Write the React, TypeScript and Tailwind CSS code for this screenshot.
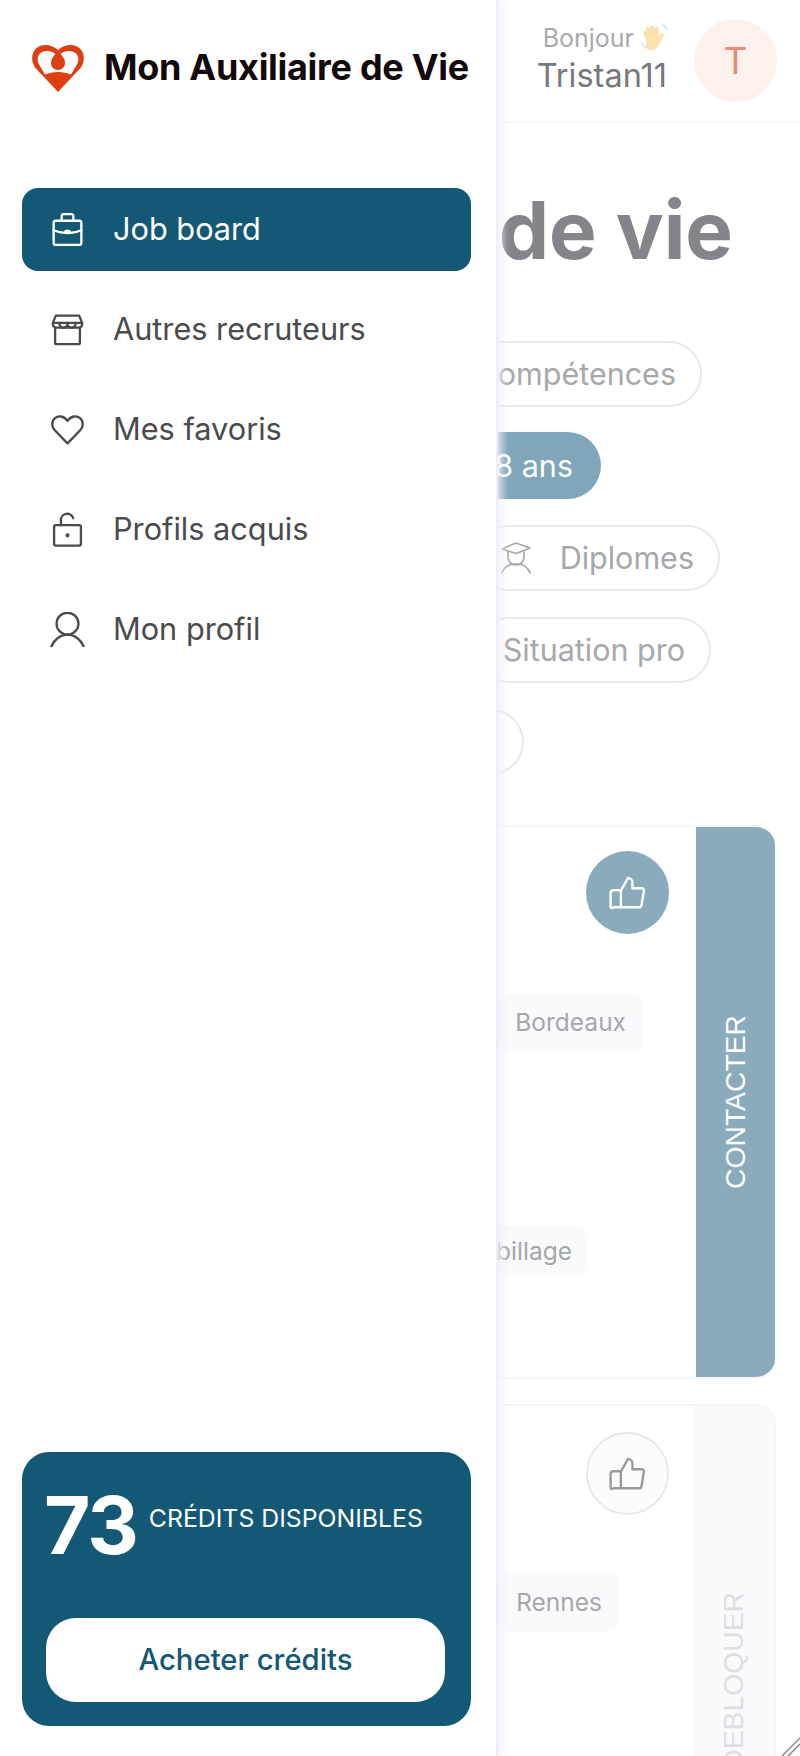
const strokeProps = { fill: "none", stroke: "currentColor", strokeWidth: 1.6, strokeLinecap: "round" as const, strokeLinejoin: "round" as const };

function Briefcase({ className }: { className: string }) {
  return (
    <svg viewBox="0 0 24 24" className={className} {...strokeProps}>
      <rect x="2.500" y="6" width="19" height="16.500" rx="1.500" />
      <path d="M8 6V3A1.500 1.500 0 0 1 9.500 1.500h5A1.500 1.500 0 0 1 16 3v3" />
      <path d="M2.500 12.500c3 1.300 5.500 1.700 8 1.800M13.500 14.300c2.500-.1 5-.5 8-1.800" />
      <rect x="10.500" y="13" width="3" height="1.500" rx=".6" />
    </svg>
  );
}
function Store({ className }: { className: string }) {
  return (
    <svg viewBox="0 0 24 24" className={className} {...strokeProps}>
      <path d="M4 2.500h16l2 5v1a2.200 2.200 0 0 1-2.200 2.200H4.200A2.200 2.200 0 0 1 2 8.500v-1z" />
      <path d="M2 7.500h20" />
      <path d="M6.500 7.500v1a2.800 2.800 0 0 0 5.500 0v-1M12 8.500a2.800 2.800 0 0 0 5.500 0v-1" />
      <path d="M3.500 11v10a1 1 0 0 0 1 1h15a1 1 0 0 0 1-1V11" />
    </svg>
  );
}
function Heart({ className }: { className: string }) {
  return (
    <svg viewBox="0 0 24 24" className={className} {...strokeProps}>
      <path d="M12 21.500 3.300 12.500C.9 10 1 6.200 3.400 4.200c2.400-2 6-1.600 8.600 1.800 2.600-3.400 6.200-3.800 8.600-1.800 2.400 2 2.500 5.800.1 8.300z" />
    </svg>
  );
}
function Lock({ className }: { className: string }) {
  return (
    <svg viewBox="0 0 24 24" className={className} {...strokeProps}>
      <rect x="2.800" y="9" width="18.400" height="14" rx="1.200" />
      <path d="M7.500 9V5.500a4.300 4.300 0 0 1 8.400-1.300" />
      <circle cx="12" cy="16" r=".6" fill="currentColor" />
    </svg>
  );
}
function User({ className }: { className: string }) {
  return (
    <svg viewBox="0 0 24 24" className={className} {...strokeProps}>
      <circle cx="12" cy="8" r="7.500" />
      <path d="M1 23.500c1.800-4.500 6-8 11-8s9.200 3.500 11 8" />
    </svg>
  );
}
function Thumb({ className }: { className: string }) {
  return (
    <svg viewBox="0 0 24 24" className={className} {...strokeProps} strokeWidth={1.5}>
      <path d="M7.500 21V10.500L12 2.500c1.500 0 2.800 1.200 2.800 2.800V9h5.800c1 0 1.600.8 1.400 1.800l-1.500 9c-.1.700-.7 1.200-1.400 1.200H2.800C1.800 22 1 21.300 1 20.300V12c0-1 .8-1.700 1.800-1.700h4.700" />
    </svg>
  );
}
function Cap({ className }: { className: string }) {
  return (
    <svg viewBox="0 0 32 34" className={className} {...strokeProps} strokeWidth={1.7}>
      <path d="M2 8 16 2l14 5-14 5.500z" />
      <path d="M8 11v5a8 8 0 0 0 16 0v-5" />
      <path d="M2 32c2-6 7-9 14-9s12 3 14 9" />
    </svg>
  );
}
function Wave({ className }: { className: string }) {
  return (
    <svg viewBox="0 0 28 28" className={className}>
      <path d="M6 15 3.500 9.500c-.8-1.800 1.500-2.800 2.400-1L8 12 6 6c-.6-2 1.900-2.800 2.600-.8L11 11 9.800 4c-.3-2 2.300-2.300 2.600-.4L14 10l.2-5c.1-2 2.500-1.800 2.500.1l.3 8 2.400-2.500c1.500-1.500 3.300.2 2 1.800l-3.500 6.500c-2 5-6.500 7.500-10 5.500C4.500 22.500 7 18 6 15z" fill="#fbe3ab" stroke="#f3d68f" strokeWidth=".5" />
      <path d="M21 2c2 .6 3.500 2 4 4M2 19c.5 2 2 3.500 4 4" fill="none" stroke="#d8e2ee" strokeWidth="1.500" strokeLinecap="round" />
    </svg>
  );
}
function Logo() {
  return (
    <svg viewBox="0 0 52 47" className="w-[52px] h-[47px] shrink-0">
      <path fillRule="evenodd" fill="#dc3f12" d="M26 47 3.500 23C-1 18-1 8 4 3.500 10-1.500 19-1 26 5 33-1 42-1.500 48 3.500 53 8 53 18 48.500 23ZM26 11C21 5.500 13 4.500 8.500 8 4.500 11.500 5 17 8 21L13 29.500C17 28 21 27 26 27S35 28 39 29.500L44 21C47 17 47.500 11.500 43.500 8 39 4.500 31 5.500 26 11Z" />
      <path fill="#dc3f12" d="M26 6c3.500 3.500 7 7.500 7 12 0 4-3.200 7-7 7s-7-3-7-7c0-4.500 3.500-8.500 7-12z" />
    </svg>
  );
}

const nav = [
  { label: "Job board", Icon: Briefcase, active: true },
  { label: "Autres recruteurs", Icon: Store },
  { label: "Mes favoris", Icon: Heart },
  { label: "Profils acquis", Icon: Lock },
  { label: "Mon profil", Icon: User },
];

function Pill({ children, className }: { children: React.ReactNode; className: string }) {
  return (
    <div className={`h-[66px] rounded-full border-2 border-[#e8e8e8] flex items-center gap-[28px] px-[24px] text-[30.500px] text-[#a7a8ab] bg-white ${className}`}>
      {children}
    </div>
  );
}

function Chip({ children, className }: { children: React.ReactNode; className: string }) {
  return (
    <div className={`rounded-[10px] bg-[#fafafc] px-[16px] flex items-center text-[24.500px] text-[#a6a7aa] ${className}`}>
      {children}
    </div>
  );
}

export default function App() {
  return (
    <div className="relative w-[800px] h-[1756px] overflow-hidden bg-white font-['Inter',sans-serif]">
      <main className="flex flex-col">
        <header className="h-[123px] border-b-2 border-[#f7f7f9] flex items-center justify-end pr-[23px] gap-[26px]">
          <div className="flex flex-col items-end">
            <div className="flex items-center gap-[6px] text-[25px] leading-[34px] text-[#a8a9ac] -mt-[4px] -mr-[2px]">
              Bonjour <Wave className="w-[30px] h-[30px]" />
            </div>
            <div className="text-[32.500px] leading-[42px] text-[#77787c] pr-[1px]">Tristan11</div>
          </div>
          <div className="w-[83px] h-[83px] rounded-full bg-[#fdf1ee] flex items-center justify-center text-[37px] text-[#e48d73]">T</div>
        </header>

        <h1 className="mt-[62px] mr-[67px] text-right text-[80px] leading-[90px] font-bold text-[#84858b] whitespace-nowrap">de vie</h1>

        <div className="mt-[66px] flex flex-col items-end">
          <Pill className="mr-[98px]">Compétences</Pill>
          <div className="mt-[25px] mr-[199px] h-[67px] rounded-full bg-[#80a6b9] flex items-center px-[28px] text-[30.500px] text-white">18 ans</div>
          <Pill className="mt-[26px] mr-[80px]"><Cap className="w-[32px] h-[34px]" /> Diplomes</Pill>
          <Pill className="mt-[26px] mr-[89px]">Situation pro</Pill>
          <Pill className="mt-[26px] mr-[276px]">Autres</Pill>
        </div>

        <section className="mt-[50px] ml-[22px] mr-[25px] h-[554px] shrink-0 flex rounded-[20px] border-t-2 border-b-2 border-[#f5f5f7] overflow-hidden">
          <div className="flex-1 flex flex-col items-end">
            <div className="mt-[24px] mr-[27px] w-[83px] h-[83px] rounded-full bg-[#8aabbc] flex items-center justify-center text-white">
              <Thumb className="w-[38px] h-[38px]" />
            </div>
            <Chip className="mt-[60px] mr-[54px] h-[57px]">Bordeaux</Chip>
            <Chip className="mt-[175px] mr-[108px] h-[50px]">Habillage</Chip>
          </div>
          <div className="w-[79px] bg-[#8aabbc] flex items-center justify-center text-white text-[28.300px]">
            <span className="[writing-mode:vertical-rl] rotate-180 font-['Liberation_Sans',sans-serif]">CONTACTER</span>
          </div>
        </section>

        <section className="mt-[25px] ml-[22px] mr-[24px] h-[552px] shrink-0 flex rounded-t-[20px] border-t-2 border-[#f5f5f7] overflow-hidden">
          <div className="flex-1 flex flex-col items-end">
            <div className="mt-[26px] mr-[24px] w-[83px] h-[83px] rounded-full border-2 border-[#e8e8e8] bg-[#fcfcfd] flex items-center justify-center text-[#98999c]">
              <Thumb className="w-[38px] h-[38px]" />
            </div>
            <Chip className="mt-[58px] mr-[75px] h-[59px]">Rennes</Chip>
          </div>
          <div className="w-[83px] bg-[#fafafc] border-r-2 border-[#f5f5f7] flex items-center justify-center text-[#dedfe2] text-[28.300px]">
            <span className="[writing-mode:vertical-rl] rotate-180 font-['Liberation_Sans',sans-serif]">DEBLOQUER</span>
          </div>
        </section>
      </main>

      <aside className="absolute left-0 top-0 bottom-0 w-[498px] bg-white border-r-2 border-[#eeeef6] shadow-[4px_0_8px_rgba(240,240,250,0.9)] flex flex-col">
        <div className="h-[188px] pl-[32px] pt-[45px] flex items-start gap-[20px]">
          <Logo />
          <span className="text-[36px] leading-[44px] font-bold text-[#14090a] tracking-[-0.3px] whitespace-nowrap">Mon Auxiliaire de Vie</span>
        </div>
        <nav className="flex flex-col gap-[17px] pl-[22px] pr-[25px]">
          {nav.map(({ label, Icon, active }) => (
            <div key={label} className={`h-[83px] rounded-[16px] flex items-center pl-[28px] gap-[28px] text-[30.700px] ${active ? "bg-[#135875] text-white" : "text-[#4b4b4d]"}`}>
              <Icon className="w-[35px] h-[35px]" />
              <span>{label}</span>
            </div>
          ))}
        </nav>
        <div className="mt-auto mb-[30px] ml-[22px] mr-[25px] h-[274px] rounded-[27px] bg-[#135875] text-white pl-[24px] pr-[26px] pt-[33px] flex flex-col">
          <div className="flex items-start gap-[12px] h-[105px]">
            <span className="text-[80px] leading-[80px] font-bold tracking-[-2px] -ml-[2px]">73</span>
            <span className="text-[24.800px] leading-[32px] mt-[17px] whitespace-nowrap">CRÉDITS DISPONIBLES</span>
          </div>
          <div className="mt-[28px] h-[84px] rounded-[30px] bg-white flex items-center justify-center text-[#135875] text-[29.300px] font-medium">Acheter crédits</div>
        </div>
      </aside>

      <svg viewBox="0 0 20 20" className="absolute right-0 bottom-0 w-[20px] h-[20px]">
        <path d="M2 20 20 2M8 20 20 8" stroke="#8a8a8a" strokeWidth="1.500" fill="none" />
      </svg>
    </div>
  );
}
